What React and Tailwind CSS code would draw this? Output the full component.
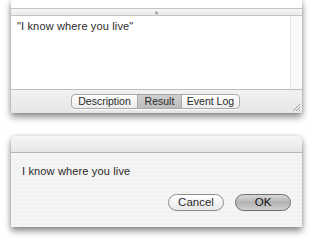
export default function App() {
  const font = { fontFamily: '"Liberation Sans", Arial, sans-serif' };
  return (
    <div className="w-[313px] h-[246px] bg-white overflow-hidden relative" style={font}>
      {/* top window */}
      <div className="ml-[11px] w-[291px] h-[113px] flex flex-col bg-white shadow-[0_4px_7px_rgba(0,0,0,0.45),0_0_4px_rgba(0,0,0,0.15)]">
        <div className="h-[8px] bg-white" />
        <div className="h-[8px] border-t border-b border-[#c4c4c4] bg-gradient-to-b from-[#f7f7f7] to-[#e9e9e9] flex items-center justify-center">
          <span className="text-[6px] leading-none text-[#999] -mt-[1px]">▲</span>
        </div>
        <div className="flex-1 flex border-b border-[#bdbdbd]">
          <div className="flex-1 bg-white pl-[6px] pt-[4px] text-[11px] leading-[13px] text-[#2a2a2a] tracking-[0.15px]">
            "I know where you live"
          </div>
          <div className="w-[12px] bg-[#fafafa] border-l border-[#e6e6e6]" />
        </div>
        <div className="h-[23px] relative bg-gradient-to-b from-[#f2f2f2] to-[#e6e6e6] flex items-center justify-center pr-[2px]">
          <div className="flex h-[15px] rounded-[4px] border border-[#a8a8a8] overflow-hidden text-[10.5px] leading-[13px] text-[#2a2a2a] bg-gradient-to-b from-[#ffffff] to-[#ececec] shadow-[0_1px_0_rgba(255,255,255,0.8)]">
            <div className="w-[66px] flex items-center justify-center border-r border-[#a8a8a8]">Description</div>
            <div className="w-[44px] flex items-center justify-center border-r border-[#a8a8a8] bg-gradient-to-b from-[#cfcfcf] to-[#bdbdbd]">Result</div>
            <div className="w-[57px] flex items-center justify-center">Event Log</div>
          </div>
          <svg className="absolute right-[1px] bottom-[1px]" width="10" height="10" viewBox="0 0 10 10">
            <path d="M9 2 L2 9 M9 5 L5 9 M9 8 L8 9" stroke="#a0a0a0" strokeWidth="1" />
          </svg>
        </div>
      </div>

      {/* dialog window */}
      <div className="ml-[11px] mt-[23px] w-[291px] h-[91px] flex flex-col rounded-t-[5px] bg-[#f3f3f3] shadow-[0_4px_7px_rgba(0,0,0,0.45),0_0_4px_rgba(0,0,0,0.15)]">
        <div className="h-[17px] rounded-t-[5px] border-b border-[#b5b5b5] bg-gradient-to-b from-[#f7f7f7] to-[#e6e6e6]" />
        <div className="flex-1 flex flex-col bg-[repeating-linear-gradient(180deg,#f5f5f5_0px,#f5f5f5_2px,#f2f2f2_2px,#f2f2f2_4px)]">
          <div className="pl-[11px] pt-[12px] text-[11px] leading-[13px] text-[#2a2a2a] tracking-[0.15px]">I know where you live</div>
          <div className="flex justify-end gap-[11px] pr-[11px] mt-[16px]">
            <div className="w-[56px] h-[17px] rounded-full border border-[#8c8c8c] bg-gradient-to-b from-[#ffffff] to-[#e8e8e8] flex items-center justify-center text-[11.5px] text-[#2a2a2a]">Cancel</div>
            <div className="w-[56px] h-[17px] rounded-full border border-[#6e6e6e] bg-gradient-to-b from-[#d8d8d8] via-[#b4b4b4] to-[#d0d0d0] flex items-center justify-center text-[11.5px] text-[#111]">OK</div>
          </div>
        </div>
      </div>
    </div>
  );
}
